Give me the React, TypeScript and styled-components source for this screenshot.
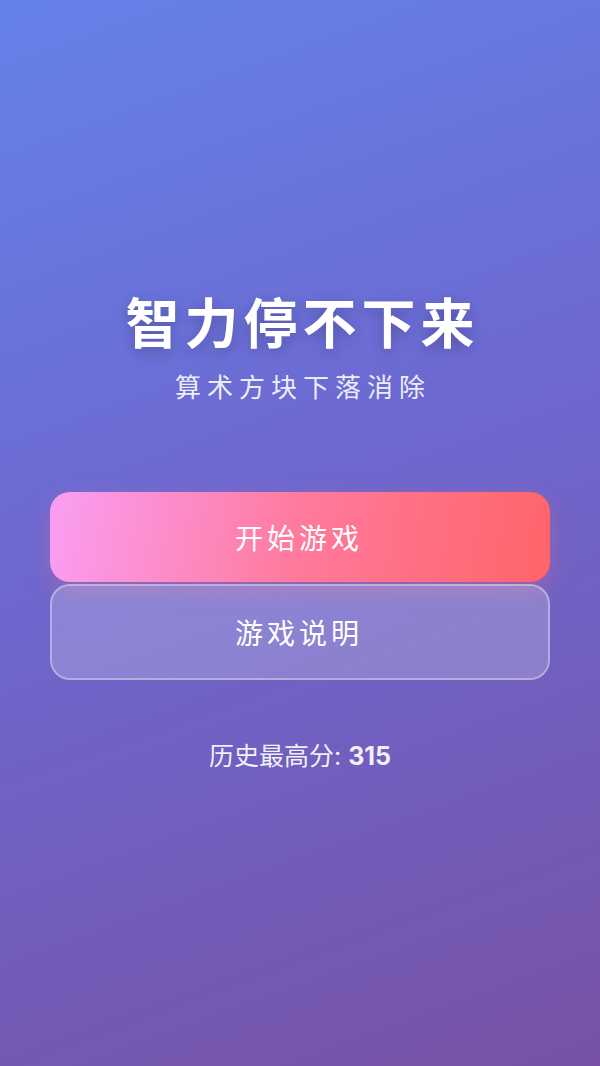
import React from "react";
import styled, { createGlobalStyle } from "styled-components";

const GlobalStyle = createGlobalStyle`
  html, body { margin: 0; padding: 0; }
  body {
    font-family: "Inter", "Noto Sans CJK SC", "Noto Sans", sans-serif;
  }
  * { box-sizing: border-box; }
`;

const Page = styled.div`
  min-height: 100vh;
  background: linear-gradient(160deg, #6482ea 0%, #6d68d0 45%, #7752a6 100%);
  display: flex;
  flex-direction: column;
  align-items: center;
  justify-content: center;
  padding: 3px 50px 4px;
  color: #fff;
`;

const Title = styled.h1`
  margin: 0;
  font-size: 54px;
  font-weight: 700;
  letter-spacing: 5px;
  padding-left: 5px;
  line-height: 1.2;
  text-shadow: 0 4px 14px rgba(0, 0, 0, 0.22);
`;

const Subtitle = styled.p`
  margin: 9px 0 0;
  font-size: 26px;
  font-weight: 400;
  letter-spacing: 6px;
  padding-left: 6px;
  color: rgba(255, 255, 255, 0.9);
`;

const Buttons = styled.div`
  width: 100%;
  margin-top: 88px;
  display: flex;
  flex-direction: column;
  gap: 2px;
`;

const Button = styled.button<{ $primary?: boolean }>`
  width: 100%;
  height: ${(p) => (p.$primary ? "90px" : "96px")};
  border-radius: 20px;
  font-family: inherit;
  font-size: 28px;
  color: #fff;
  letter-spacing: 4px;
  padding-left: 4px;
  cursor: pointer;
  border: ${(p) => (p.$primary ? "none" : "2px solid rgba(255, 255, 255, 0.35)")};
  background: ${(p) =>
    p.$primary
      ? "linear-gradient(100deg, #fa9ef4 0%, #ff7a9c 50%, #ff6468 100%)"
      : "rgba(255, 255, 255, 0.2)"};
  box-shadow: ${(p) =>
    p.$primary ? "0 8px 24px rgba(255, 107, 129, 0.3)" : "none"};
`;

const Score = styled.div`
  margin-top: 56px;
  font-size: 25px;
  color: rgba(255, 255, 255, 0.92);
`;

const ScoreValue = styled.span`
  font-weight: 700;
`;

export default function App() {
  return (
    <>
      <GlobalStyle />
      <Page>
        <Title>智力停不下来</Title>
        <Subtitle>算术方块下落消除</Subtitle>
        <Buttons>
          <Button $primary>开始游戏</Button>
          <Button>游戏说明</Button>
        </Buttons>
        <Score>
          历史最高分: <ScoreValue>315</ScoreValue>
        </Score>
      </Page>
    </>
  );
}
